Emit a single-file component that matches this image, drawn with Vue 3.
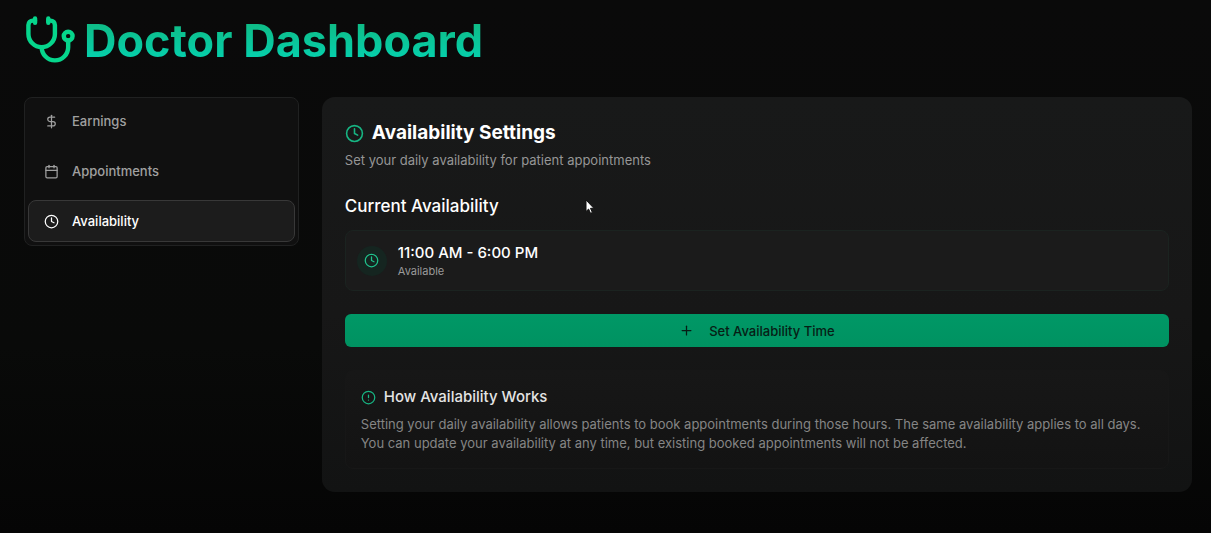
<script setup>
import { ref } from 'vue'

const active = ref('Availability')
const tabs = [
  { name: 'Earnings', icon: 'dollar' },
  { name: 'Appointments', icon: 'calendar' },
  { name: 'Availability', icon: 'clock' },
]
</script>

<template>
  <div class="page">
    <header class="header">
      <svg class="logo" viewBox="0 0 24 24" aria-hidden="true">
        <path d="M11 2v2" />
        <path d="M5 2v2" />
        <path d="M5 3H4a2 2 0 0 0-2 2v4a6 6 0 0 0 12 0V5a2 2 0 0 0-2-2h-1" />
        <path d="M8 15a6 6 0 0 0 12 0v-3" />
        <circle cx="20" cy="10" r="2" />
      </svg>
      <h1>Doctor Dashboard</h1>
    </header>

    <div class="layout">
      <nav class="tabs" aria-label="Dashboard sections">
        <button
          v-for="tab in tabs"
          :key="tab.name"
          type="button"
          class="tab"
          :class="{ active: active === tab.name }"
          @click="active = tab.name"
        >
          <svg class="icon" viewBox="0 0 24 24" aria-hidden="true">
            <template v-if="tab.icon === 'dollar'">
              <path d="M12 2v20" />
              <path d="M17 5H9.500a3.500 3.500 0 0 0 0 7h5a3.500 3.500 0 0 1 0 7H6" />
            </template>
            <template v-else-if="tab.icon === 'calendar'">
              <path d="M8 2v4" />
              <path d="M16 2v4" />
              <rect width="18" height="18" x="3" y="4" rx="2" />
              <path d="M3 10h18" />
            </template>
            <template v-else>
              <circle cx="12" cy="12" r="10" />
              <path d="M12 6v6l4 2" />
            </template>
          </svg>
          <span>{{ tab.name }}</span>
        </button>
      </nav>

      <main class="card">
        <h2>
          <svg class="icon title-icon" viewBox="0 0 24 24" aria-hidden="true">
            <circle cx="12" cy="12" r="10" />
            <path d="M12 6v6l4 2" />
          </svg>
          Availability Settings
        </h2>
        <p class="subtitle">Set your daily availability for patient appointments</p>

        <h3>Current Availability</h3>
        <div class="slot">
          <span class="badge">
            <svg class="icon" viewBox="0 0 24 24" aria-hidden="true">
              <circle cx="12" cy="12" r="10" />
              <path d="M12 6v6l4 2" />
            </svg>
          </span>
          <div>
            <p class="time">11:00 AM - 6:00 PM</p>
            <p class="status">Available</p>
          </div>
        </div>

        <button type="button" class="primary">
          <svg class="icon" viewBox="0 0 24 24" aria-hidden="true">
            <path d="M5 12h14" />
            <path d="M12 5v14" />
          </svg>
          Set Availability Time
        </button>

        <section class="info">
          <h4>
            <svg class="icon" viewBox="0 0 24 24" aria-hidden="true">
              <circle cx="12" cy="12" r="10" />
              <path d="M12 8v4" />
              <path d="M12 16h.01" />
            </svg>
            How Availability Works
          </h4>
          <p>
            Setting your daily availability allows patients to book appointments during those hours. The
            same availability applies to all days. You can update your availability at any time, but
            existing booked appointments will not be affected.
          </p>
        </section>
      </main>
    </div>

    <svg class="cursor" viewBox="0 0 10 15" aria-hidden="true">
      <path d="M1 1v11.500l2.600-2.400 1.900 4.200 1.900-.8-1.900-4.200h3.400z" />
    </svg>
  </div>
</template>

<style>
body {
  margin: 0;
  background: #060606;
}
</style>

<style scoped>
.page {
  position: relative;
  box-sizing: border-box;
  min-height: 100vh;
  padding: 14px 19px 40px 24px;
  background: linear-gradient(#0a0a0a 0%, #090a09 65%, #050505 100%);
  color: #fff;
  font-family: Inter, "Liberation Sans", sans-serif;
  font-size: 13px;
}

h1, h2, h3, h4, p {
  margin: 0;
}

.header {
  display: flex;
  align-items: center;
  gap: 7px;
  height: 53px;
  margin-bottom: 30px;
}

.logo {
  flex: none;
  width: 53px;
  height: 53px;
  fill: none;
  stroke: #06d68c;
  stroke-width: 2;
  stroke-linecap: round;
  stroke-linejoin: round;
}

h1 {
  background: linear-gradient(to bottom, #10b981 10%, #04d3b2 90%);
  background-clip: text;
  color: transparent;
  font-size: 45px;
  font-weight: 700;
  line-height: 56px;
}

.layout {
  display: grid;
  grid-template-columns: minmax(0, 6fr) minmax(0, 19fr);
  align-items: start;
  gap: 23px;
}

.icon {
  flex: none;
  width: 15px;
  height: 15px;
  fill: none;
  stroke: currentColor;
  stroke-width: 2;
  stroke-linecap: round;
  stroke-linejoin: round;
}

.tabs {
  display: flex;
  flex-direction: column;
  gap: 8px;
  padding: 2px 3px 3px;
  border: 1px solid #202121;
  border-radius: 8px;
  background: #101010;
}

.tab {
  display: flex;
  align-items: center;
  gap: 13px;
  box-sizing: border-box;
  height: 42px;
  padding: 0 15px;
  border: 1px solid transparent;
  border-radius: 8px;
  background: transparent;
  color: #a0a0a0;
  font: inherit;
  font-weight: 500;
  cursor: pointer;
}

.tab.active {
  border-color: #383838;
  background: #1c1c1c;
  color: #fff;
}

.card {
  padding: 23px;
  border-radius: 13px;
  background: linear-gradient(#181919, #171717 55%, #121313);
}

h2 {
  display: flex;
  align-items: center;
  gap: 8px;
  font-size: 19px;
  font-weight: 700;
  line-height: 26px;
}

.title-icon {
  width: 19px;
  height: 19px;
}

.title-icon,
.info .icon {
  color: #17b583;
}

.subtitle {
  margin-top: 5px;
  color: #969696;
  line-height: 19px;
}

h3 {
  margin: 23px 0 11px;
  font-size: 17px;
  font-weight: 500;
  line-height: 26px;
}

.slot {
  display: flex;
  align-items: center;
  gap: 11px;
  padding: 11px;
  border: 1px solid #1b2320;
  border-radius: 8px;
  background: #1b1b1b;
}

.badge {
  display: grid;
  place-items: center;
  width: 30px;
  height: 30px;
  border-radius: 50%;
  background: #152520;
  color: #20c38d;
}

.time {
  font-size: 15px;
  font-weight: 500;
  line-height: 22px;
}

.status {
  color: #9a9a9a;
  font-size: 11px;
  line-height: 15px;
}

.primary {
  display: flex;
  align-items: center;
  justify-content: center;
  gap: 15px;
  width: 100%;
  height: 33px;
  margin: 23px 0;
  padding: 0 15px;
  border: 0;
  border-radius: 6px;
  background: linear-gradient(#009866, #009261);
  color: #071d15;
  font: inherit;
  font-weight: 500;
  cursor: pointer;
}

.info {
  padding: 15px;
  border: 1px solid #171717;
  border-radius: 8px;
  background: linear-gradient(#171717, #131313);
}

h4 {
  display: flex;
  align-items: center;
  gap: 8px;
  margin-bottom: 7px;
  color: #e4e4e4;
  font-size: 15px;
  font-weight: 500;
  line-height: 22px;
}

.info p {
  color: #858585;
  line-height: 19px;
}

.cursor {
  position: absolute;
  top: 199px;
  left: 585px;
  width: 10px;
  height: 15px;
  fill: #fff;
  stroke: #111;
  stroke-width: 1;
  pointer-events: none;
}
</style>
